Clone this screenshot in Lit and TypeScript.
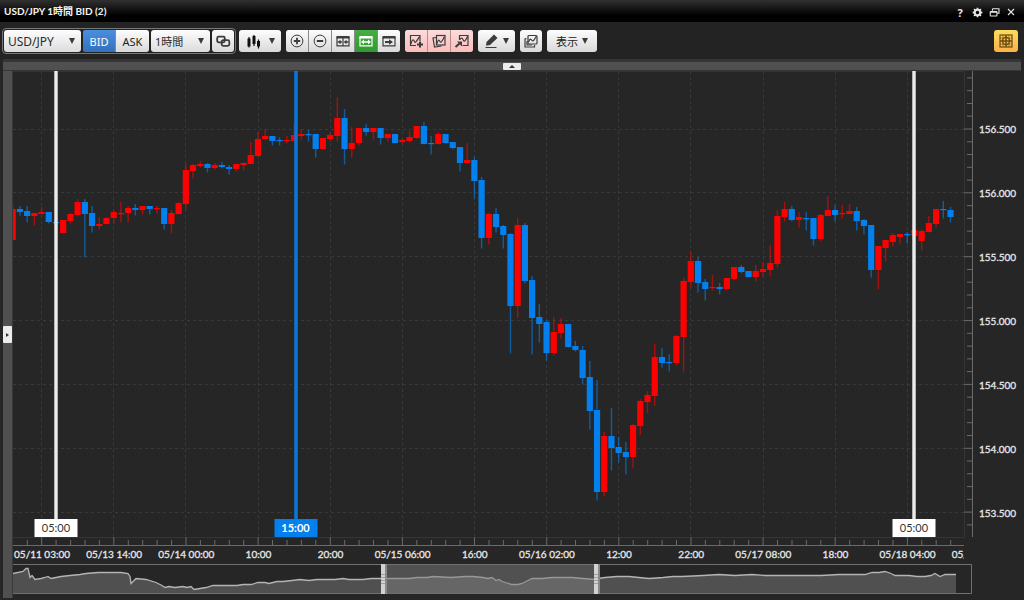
import { LitElement, html, svg, css } from "lit";
import { customElement, property } from "lit/decorators.js";

type Candle = [dir: "u" | "d", high: number, top: number, bottom: number, low: number];

/* Each entry: direction (u = up, d = down), high, body top, body bottom, low in window units. */
const CANDLES: Candle[] = `
u 205 209 240 240;d 206 209 212 215;d 206 211 216 222;u 213 213 216 225;u 207 212 214 214;d 212 212 222 223;d 221 222 223 223;u 220 220 233 233;u 213 214 221 223;u 199 202 215 216;
d 199 202 214 257;d 206 213 226 232;u 217 224 226 229;u 217 218 224 224;u 210 212 218 223;u 202 213 214 222;u 206 208 213 222;d 204 208 210 215;u 206 206 210 214;d 206 206 209 214;
u 206 208 209 213;d 208 208 224 229;u 210 213 224 233;u 202 203 214 214;u 164 170 204 209;u 164 165 171 178;u 161 164 166 167;d 163 164 168 172;u 163 165 168 169;d 162 165 167 168;
d 165 167 169 174;u 164 164 169 171;u 162 163 165 170;u 142 155 164 164;u 132 139 156 156;u 129 136 139 139;d 136 136 141 145;d 137 140 141 145;u 136 140 141 143;u 123 135 141 141;
u 129 134 136 139;d 130 134 135 141;d 134 134 149 157;u 138 138 149 149;u 133 135 139 141;u 97 118 136 141;d 109 118 149 164;u 127 143 149 157;u 128 128 143 145;d 124 128 132 135;
u 128 128 132 139;d 128 128 138 144;u 134 134 138 141;d 134 134 143 143;u 139 140 142 143;u 131 137 141 142;u 126 126 138 138;d 122 126 144 144;d 136 143 144 154;u 132 134 144 144;
d 134 134 143 143;d 142 142 148 149;d 147 147 163 171;u 143 160 163 163;d 157 160 181 198;d 177 180 238 248;u 213 214 238 244;d 208 214 227 232;d 225 226 235 248;d 233 234 306 353;
u 218 225 306 317;d 223 225 281 283;d 276 280 318 354;d 304 317 324 342;d 320 322 353 360;u 317 332 353 355;u 318 324 333 338;d 324 324 347 347;d 341 346 350 351;d 346 350 378 384;
d 361 377 411 429;d 380 410 492 500;u 432 436 492 496;d 408 436 448 470;d 437 447 453 462;d 442 452 457 474;u 424 425 457 468;u 399 401 426 434;u 391 395 402 413;u 344 357 396 405;
d 348 357 363 367;d 354 362 363 371;u 335 336 363 365;u 278 281 337 372;u 252 261 282 287;d 257 261 283 292;d 279 282 289 300;u 275 287 288 290;d 283 287 289 294;u 278 278 289 290;
u 267 267 279 280;d 265 267 272 273;d 271 271 277 277;u 265 271 277 281;u 262 269 272 276;u 245 263 270 276;u 210 216 264 267;u 202 209 217 221;d 206 209 220 221;u 212 217 220 227;
d 212 218 219 230;d 218 218 239 245;u 214 215 239 241;u 196 210 216 216;d 205 210 215 221;u 205 213 214 218;u 204 211 214 214;d 207 211 221 230;d 219 220 226 234;d 225 225 270 277;
u 246 246 270 289;u 240 240 248 261;u 233 235 242 246;u 234 234 237 243;d 232 234 235 243;u 230 230 236 236;u 229 231 241 250;u 216 223 232 232;u 209 209 224 227;d 201 209 210 218;
d 207 210 217 222`
  .trim()
  .split(";")
  .map((row) => {
    const [dir, ...values] = row.trim().split(" ");
    return [dir, ...values.map(Number)] as Candle;
  });

const PRICES = ["156.500", "156.000", "155.500", "155.000", "154.500", "154.000", "153.500"];
const TIMES = [
  "05/11 03:00", "05/13 14:00", "05/14 00:00", "10:00", "20:00", "05/15 06:00", "16:00",
  "05/16 02:00", "12:00", "22:00", "05/17 08:00", "18:00", "05/18 04:00", "05/18 14:00",
];

const PLOT_W = 960;
const PLOT_H = 475;
const STEP = 7.214;
const TICK_X = 28.7;
const TICK_PITCH = STEP * 10;
const TICK_Y = 58;
const PRICE_PITCH = 63.85;

const HISTORY: [number, number][] = [
  [0, 9], [10, 7], [13, 4], [15, 4], [17, 13], [19, 11], [22, 15], [28, 14], [32, 13], [35, 12], [38, 14], [43, 13], [48, 12],
  [57, 11], [67, 10], [73, 9], [85, 8], [97, 8], [108, 8], [115, 9], [117, 12], [118, 19], [123, 14], [133, 15], [143, 18],
  [149, 21], [152, 23], [156, 22], [162, 23], [170, 22], [174, 23], [178, 22], [181, 25], [187, 24], [193, 23], [200, 21],
  [208, 21], [217, 21], [224, 21], [230, 20], [238, 20], [245, 18], [252, 18], [256, 19], [264, 17], [270, 17], [279, 16],
  [287, 15], [296, 16], [304, 15], [314, 15], [322, 15], [330, 14], [336, 15], [344, 15], [350, 15], [358, 14], [367, 14],
  [384, 14], [396, 14], [404, 13], [414, 13], [420, 12], [438, 13], [452, 12], [460, 12], [470, 13], [475, 14], [479, 13],
  [483, 16], [486, 15], [489, 17], [499, 20], [505, 20], [509, 19], [515, 16], [519, 14], [529, 14], [539, 13], [549, 13],
  [559, 13], [570, 14], [582, 15], [585, 14], [592, 13], [604, 12], [616, 12], [626, 13], [636, 14], [650, 13], [660, 12],
  [669, 12], [690, 11], [706, 10], [722, 11], [739, 10], [752, 11], [762, 11], [776, 11], [792, 11], [808, 11], [826, 10],
  [840, 10], [852, 10], [859, 8], [866, 8], [872, 7], [878, 9], [882, 11], [896, 11], [904, 12], [912, 12], [918, 11],
  [922, 9], [927, 12], [932, 10], [943, 10],
];

const framed = (inner: unknown) => html`<svg class="icon" viewBox="0 0 16 16" aria-hidden="true">${inner}</svg>`;

const ICONS = {
  link: framed(svg`<rect x="2.200" y="3.700" width="7.600" height="5.600" rx="1.500" stroke-width="1.800"/><rect x="6.700" y="7.200" width="7.600" height="5.600" rx="1.500" stroke-width="1.800"/>`),
  candles: framed(svg`<path class="solid" d="M1.500 5.500h3v8h-3zM6.500 3h3v8h-3zM11 8h3v5.500h-3z"/><path d="M3 4v10.500M8 2v11M12.500 6.500v9"/>`),
  zoomIn: framed(svg`<circle cx="8" cy="8" r="5.900" stroke-width="1"/><path stroke-width="1.800" d="M4.800 8h6.400M8 4.800v6.400"/>`),
  zoomOut: framed(svg`<circle cx="8" cy="8" r="5.900" stroke-width="1"/><path stroke-width="1.800" d="M4.800 8h6.400"/>`),
  narrow: framed(svg`<path class="solid" d="M1.500 3h13v2.500h-13z"/><path d="M2 4v8.800h12V4M8 5v8"/><path d="M2.500 9h3M13.500 9h-3" stroke-width="1.500"/><path class="solid" d="M4.500 6.800L7.300 9l-2.800 2.200zM11.500 6.800L8.700 9l2.800 2.200z"/>`),
  widen: framed(svg`<path class="solid" d="M1.500 3h13v2.500h-13z"/><path d="M2 4v8.800h12V4"/><path d="M5 9h6" stroke-width="1.500"/><path class="solid" d="M6 6.500L3 9l3 2.500zM10 6.500L13 9l-3 2.500z"/>`),
  latest: framed(svg`<path class="solid" d="M1.500 3h13v2.500h-13z"/><path d="M2 4v8.800h12V4"/><path class="solid" d="M4 7.900h4V6.200L12 9l-4 2.800v-1.700H4z"/>`),
  addChart: framed(svg`<path d="M8 12.500H2.500v-10h9.500V8M3 11c1-5 2.500-5 3.500-2.500s2.500-1 5-5"/><path stroke-width="2" d="M12 8.500v6M9 11.500h6"/>`),
  copyChart: framed(svg`<path d="M5 4.500L2 5l1.500 9 7-1"/><rect x="5.500" y="2.500" width="8.500" height="9.500"/><path d="M6 10.500c1-4 2-4 3-2s2.500-1 4.500-5"/>`),
  pullChart: framed(svg`<path d="M5.500 7V2.500H14v10H8.500M6 6.500c1.500-2.500 2.500-1 3.500 1s2.500-1 4-4"/><path stroke-width="2" d="M1.500 14l4-3.500"/><path class="solid" d="M3 8.500h5v5z"/>`),
  pen: framed(svg`<path class="solid" d="M2.500 9L10 1.500l3.500 3.500L6 12l-4 .800z"/><path d="M1.500 14.500h11" stroke-width="1"/>`),
  stack: framed(svg`<rect x="5" y="2.500" width="9" height="8.500" rx="1"/><path d="M3.500 5.500l-1.500.500v8h9.500V12M5.500 9c1.500-4 2.500-3 3.500-1.500s2.500-1 4.500-4.500M4 8v4h5"/>`),
  grid: framed(svg`<rect x="2" y="2" width="12" height="12"/><path d="M8 2v12M2 8h12" stroke-width="1.500"/><circle cx="8" cy="8" r="3.600"/><path d="M5 2v12M11 2v12M2 5h12M2 11h12" stroke-width=".6"/>`),
  gear: framed(svg`<circle cx="8" cy="8" r="3.900" stroke-width="2.800"/><path stroke-width="2.600" d="M8 1v2.500M8 12.500v2.500M1 8h2.500M12.500 8h2.500M3 3l1.800 1.800M11.200 11.200l1.800 1.800M13 3l-1.800 1.800M4.800 11.200l-1.800 1.800"/>`),
  restore: framed(svg`<path d="M5 5.500V3.500q0-1 1-1h8.500v6.500H12" stroke-width="1.600"/><rect x="1.800" y="6.500" width="9.800" height="6.500" rx="1" stroke-width="1.600"/><path stroke-width="2.400" d="M2 7.200h9.500"/>`),
  close: framed(svg`<path stroke-width="2.200" d="M2 2l12 12M14 2L2 14"/>`),
};

@customElement("candle-plot")
class CandlePlot extends LitElement {
  static styles = css`
    :host { display: block; position: relative; min-height: 0; overflow: hidden; }
    .canvas { display: block; width: 100%; height: 100%; }
    .up { fill: #fe0000; }
    .down { fill: #0380ee; }
    .wick { opacity: 0.6; }
    .grid { fill: none; stroke: #393939; stroke-dasharray: 3 3; }
    .edge { fill: none; stroke: #343434; }
    .axis { fill: none; stroke: #6a6a6a; }
    .marker {
      position: absolute; top: 0; bottom: 9px; transform: translateX(-50%);
      display: flex; flex-direction: column; align-items: center;
      font: 11px "Lato", "Noto Sans CJK JP", sans-serif; color: #333;
    }
    .stem { flex: 1; width: 1px; background: #fff; border: solid #d6d6d6; border-width: 0 1px; }
    .flag { width: 43px; line-height: 18px; text-align: center; background: #fff; }
    .active { color: #fff; font-weight: 700; }
    .active .stem { background: #0380ee; border-color: #0a72d0; }
    .active .flag { background: #0380ee; }
  `;

  private candle([dir, high, top, bottom, low]: Candle, i: number) {
    const x = i * STEP - 0.3;
    const kind = dir === "u" ? "up" : "down";
    return svg`<rect class="wick ${kind}" x=${x - 0.7} y=${high - 71} width="1.400" height=${low - high + 0.5}/>
      <rect class=${kind} x=${x - 3.1} y=${top - 71} width="6.200" height=${Math.max(1.2, bottom - top)}/>`;
  }

  render() {
    const xs = TIMES.slice(0, 13).map((_, i) => TICK_X + i * TICK_PITCH);
    const ys = PRICES.map((_, i) => TICK_Y + i * PRICE_PITCH);
    let ticks = "";
    for (let i = -1; i < 65; i++) {
      const x = TICK_X + (i * TICK_PITCH) / 5;
      if (x < 951) ticks += `M${x.toFixed(1)} 474v${i % 5 ? -5 : -8}`;
    }
    for (let i = -4; i < 32; i++) {
      const y = TICK_Y + (i * PRICE_PITCH) / 5;
      if (y < 465) ticks += `M959 ${y.toFixed(1)}h${i % 5 ? -5 : -8}`;
    }
    const markers = [
      { at: 43, text: "05:00", on: false },
      { at: 282.5, text: "15:00", on: true },
      { at: 901, text: "05:00", on: false },
    ];
    return html`
      <svg class="canvas" viewBox="0 0 ${PLOT_W} ${PLOT_H}" preserveAspectRatio="none" role="img" aria-label="USD/JPY">
        <path class="grid" d=${xs.map((x) => `M${Math.floor(x) + 0.5} 0V466`).join("")}/>
        <path class="grid" d=${ys.map((y) => `M0 ${Math.floor(y) + 0.5}H951`).join("")}/>
        <path class="edge" d="M951.500 0V466.500M0 466.500H951M0 .500H951"/>
        <path class="axis" d="M959.500 0V466M0 474.500H951"/>
        <path class="axis" d=${ticks}/>
        ${CANDLES.map((c, i) => this.candle(c, i))}
      </svg>
      ${markers.map(
        (m) => html`<div class="marker ${m.on ? "active" : ""}" style="left:${((m.at / PLOT_W) * 100).toFixed(2)}%">
          <span class="stem"></span><span class="flag">${m.text}</span>
        </div>`
      )}`;
  }
}

@customElement("history-strip")
class HistoryStrip extends LitElement {
  static styles = css`
    :host { display: block; }
    .canvas { display: block; width: 100%; height: 30px; }
    .area { fill: #505050; }
    .line { fill: none; stroke: #b4b4b4; stroke-width: 1.3; }
    .frame { fill: none; stroke: #707070; }
    .window { fill: #7c7c7c; opacity: 0.5; }
    .shade { fill: #8a8a8a; }
    .grip { fill: #d2d2d2; }
    .notch { stroke: #a0a0a0; }
  `;

  render() {
    const line = HISTORY.map(([x, y]) => `${x},${y + 0.5}`).join(" ");
    const grip = (x: number) => svg`<rect class="shade" x=${x} y="0" width="6" height="30"/>
      <rect class="grip" x=${x} y="0" width="4" height="30"/>
      <path class="notch" d="M${x} 10.500h4M${x} 13.500h4M${x} 16.500h4M${x} 19.500h4"/>`;
    return html`<svg class="canvas" viewBox="0 0 960 30" preserveAspectRatio="none" role="img" aria-label="Range">
      <polygon class="area" points="0,29 ${line} 943,29"/>
      <polyline class="line" points=${line}/>
      <rect class="window" x="370" y="0" width="213" height="30"/>
      <path class="frame" d="M0 .500H958.500V29.500H0"/>
      ${grip(368)}${grip(581)}
    </svg>`;
  }
}

@customElement("drop-down")
class DropDown extends LitElement {
  @property({ attribute: false }) options: string[] = [];
  @property() label = "";

  static styles = css`
    :host { display: grid; grid-template-columns: 1fr 12px; align-items: center; height: 22px;
      border-radius: 3px; background: linear-gradient(#fdfdfd, #dcdcdc); }
    .box { grid-area: 1 / 1 / 2 / 3; width: 100%; height: 22px; padding: 0 0 0 4px; border: 0;
      appearance: none; background: none; font: inherit; color: #2b2b2b; }
    .arrow { grid-area: 1 / 2; width: 0; height: 0; border: solid transparent; border-width: 6px 3px 0;
      border-top-color: #3a3a3a; pointer-events: none; }
  `;

  render() {
    return html`<select class="box" aria-label=${this.label}>
        ${this.options.map((o) => html`<option>${o}</option>`)}
      </select><span class="arrow"></span>`;
  }
}

@customElement("app-root")
class AppRoot extends LitElement {
  static styles = css`
    :host { display: flex; flex-direction: column; height: 100vh; min-height: 400px; overflow: hidden;
      background: #262626; color: #e2e2e2; font: 11px "Noto Sans", "Noto Sans CJK JP", sans-serif; }
    * { box-sizing: border-box; }
    button { font: inherit; color: #2b2b2b; border: 0; padding: 0; margin: 0; }

    .titlebar { display: flex; align-items: center; justify-content: space-between; height: 22px;
      padding: 0 7px 0 4px; background: linear-gradient(#303030, #000 70%); }
    .title { margin: 0; font: 700 10px/20px "Lato", "Noto Sans CJK JP", sans-serif; color: #f4f4f4; }
    .window-tools { display: flex; gap: 5px; padding-top: 2px; }
    .tool { display: grid; place-items: center; width: 12px; height: 14px; background: none; color: #e6e6e6; font-weight: 700; }
    .tool .icon { width: 11px; height: 11px; }
    .tool.close .icon { width: 8px; height: 8px; }

    .icon { display: block; width: 16px; height: 16px; fill: none; stroke: currentColor; stroke-width: 1.2; }
    .icon .solid { fill: currentColor; stroke: none; }

    .toolbar { display: flex; align-items: center; justify-content: space-between; height: 37px; padding: 6px 6px 5px 2px; background: #232323; }
    .left { display: flex; gap: 5px; align-items: center; }
    .lead { display: flex; gap: 3px; align-items: center; }
    .scope { display: flex; gap: 2px; padding: 1px; border: 1px solid #777; border-radius: 4px; }
    .pair { width: 77px; font-size: 12px; }
    .span { width: 59px; font-size: 11px; }
    .bar { display: flex; gap: 1px; border-radius: 3px; overflow: hidden; background: #8a8a8a; }
    .bar.pink { background: #b98a8a; }
    .btn { display: flex; align-items: center; justify-content: center; width: 22px; height: 22px;
      background: linear-gradient(#fdfdfd, #d9d9d9); color: #3c3c3c; }
    .btn.single { border-radius: 3px; }
    .btn.side { width: 32px; }
    .btn.ask { width: 33px; color: #222; }
    .btn.menu { width: 37px; gap: 3px; }
    .btn.type { width: 42px; gap: 7px; color: #111; }
    .btn.view { width: 50px; gap: 4px; color: #222; }
    .btn.blue { background: linear-gradient(#4a8fdc, #3470bd); color: #fff; }
    .btn.green { background: linear-gradient(#46ad42, #2f9a2f); color: #fff; }
    .btn.rose { background: linear-gradient(#fadcdc, #fcbcbc); }
    .btn.gold { width: 24px; background: linear-gradient(#fcdc5e, #fdb149); color: #6b4a10; }
    .arrow { width: 0; height: 0; border: solid transparent; border-width: 6px 3px 0; border-top-color: #3a3a3a; }

    .fold { display: flex; justify-content: center; align-items: center; height: 12px; margin: 0 3px;
      border: solid #353535; border-width: 3px 0 1px; background: #505050; }
    .fold-btn, .side-btn { display: grid; place-items: center; background: #ececec; border-radius: 1px; }
    .fold-btn { width: 18px; height: 7px; }
    .fold-mark { width: 0; height: 0; border: solid transparent; border-width: 0 3px 3px; border-bottom-color: #333; }
    .side-btn { width: 9px; height: 17px; }
    .side-mark { width: 0; height: 0; border: solid transparent; border-width: 2px 0 2px 3px; border-left-color: #333; }

    .main { flex: 1; min-height: 0; display: grid; grid-template-columns: 10px minmax(0, 1fr) 51px; margin: 0 0 2px 3px; }
    .rail { display: flex; align-items: center; background: #505050; border-right: 1px solid #383838; }
    .chart { display: grid; grid-template-rows: minmax(0, 1fr) 18px 30px 4px; min-height: 0; }
    .times { margin-right: 9px; overflow: hidden; }
    .time-row { display: grid; grid-template-columns: repeat(14, 7.53%); margin-left: -7px;
      font: 10px/17px "Lato", sans-serif; color: #e8e8e8; text-align: center; white-space: nowrap; -webkit-text-stroke: 0.3px; }
    .prices { display: grid; grid-template-rows: 26fr repeat(7, 64fr) 1fr; margin-bottom: 52px; padding-left: 6px;
      align-items: center; font: 10px/14px "Lato", sans-serif; color: #e8e8e8; -webkit-text-stroke: 0.3px; }
    .spacer { min-height: 0; }
  `;

  render() {
    const button = (icon: unknown, label: string, cls = "") =>
      html`<button class="btn ${cls}" aria-label=${label}>${icon}</button>`;
    return html`
      <header class="titlebar">
        <h1 class="title">USD/JPY 1時間 BID (2)</h1>
        <div class="window-tools">
          <button class="tool">?</button>
          <button class="tool" aria-label="設定">${ICONS.gear}</button>
          <button class="tool" aria-label="元に戻す">${ICONS.restore}</button>
          <button class="tool close" aria-label="閉じる">${ICONS.close}</button>
        </div>
      </header>
      <nav class="toolbar">
        <div class="left">
          <div class="lead">
            <div class="scope">
              <drop-down class="pair" label="通貨ペア" .options=${["USD/JPY"]}></drop-down>
              <div class="bar">
                <button class="btn side blue">BID</button>
                <button class="btn ask">ASK</button>
              </div>
              <drop-down class="span" label="足種" .options=${["1時間"]}></drop-down>
              ${button(ICONS.link, "連動", "single")}
            </div>
            <button class="btn single type" aria-label="チャート種類">${ICONS.candles}<span class="arrow"></span></button>
          </div>
          <div class="bar">
            ${button(ICONS.zoomIn, "拡大")}${button(ICONS.zoomOut, "縮小")}${button(ICONS.narrow, "間隔を狭める")}
            ${button(ICONS.widen, "間隔を広げる", "green")}${button(ICONS.latest, "最新")}
          </div>
          <div class="bar pink">
            ${button(ICONS.addChart, "追加", "rose")}${button(ICONS.copyChart, "複製", "rose")}${button(ICONS.pullChart, "呼出", "rose")}
          </div>
          <button class="btn single menu" aria-label="描画">${ICONS.pen}<span class="arrow"></span></button>
          ${button(ICONS.stack, "重ねて表示", "single")}
          <button class="btn single view">表示<span class="arrow"></span></button>
        </div>
        ${button(ICONS.grid, "グリッド", "single gold")}
      </nav>
      <div class="fold"><button class="fold-btn" aria-label="折りたたむ"><span class="fold-mark"></span></button></div>
      <main class="main">
        <div class="rail"><button class="side-btn" aria-label="開く"><span class="side-mark"></span></button></div>
        <section class="chart">
          <candle-plot></candle-plot>
          <div class="times"><div class="time-row">${TIMES.map((t) => html`<span>${t}</span>`)}</div></div>
          <history-strip></history-strip>
        </section>
        <div class="prices"><span class="spacer"></span>${PRICES.map((p) => html`<span>${p}</span>`)}</div>
      </main>`;
  }
}
